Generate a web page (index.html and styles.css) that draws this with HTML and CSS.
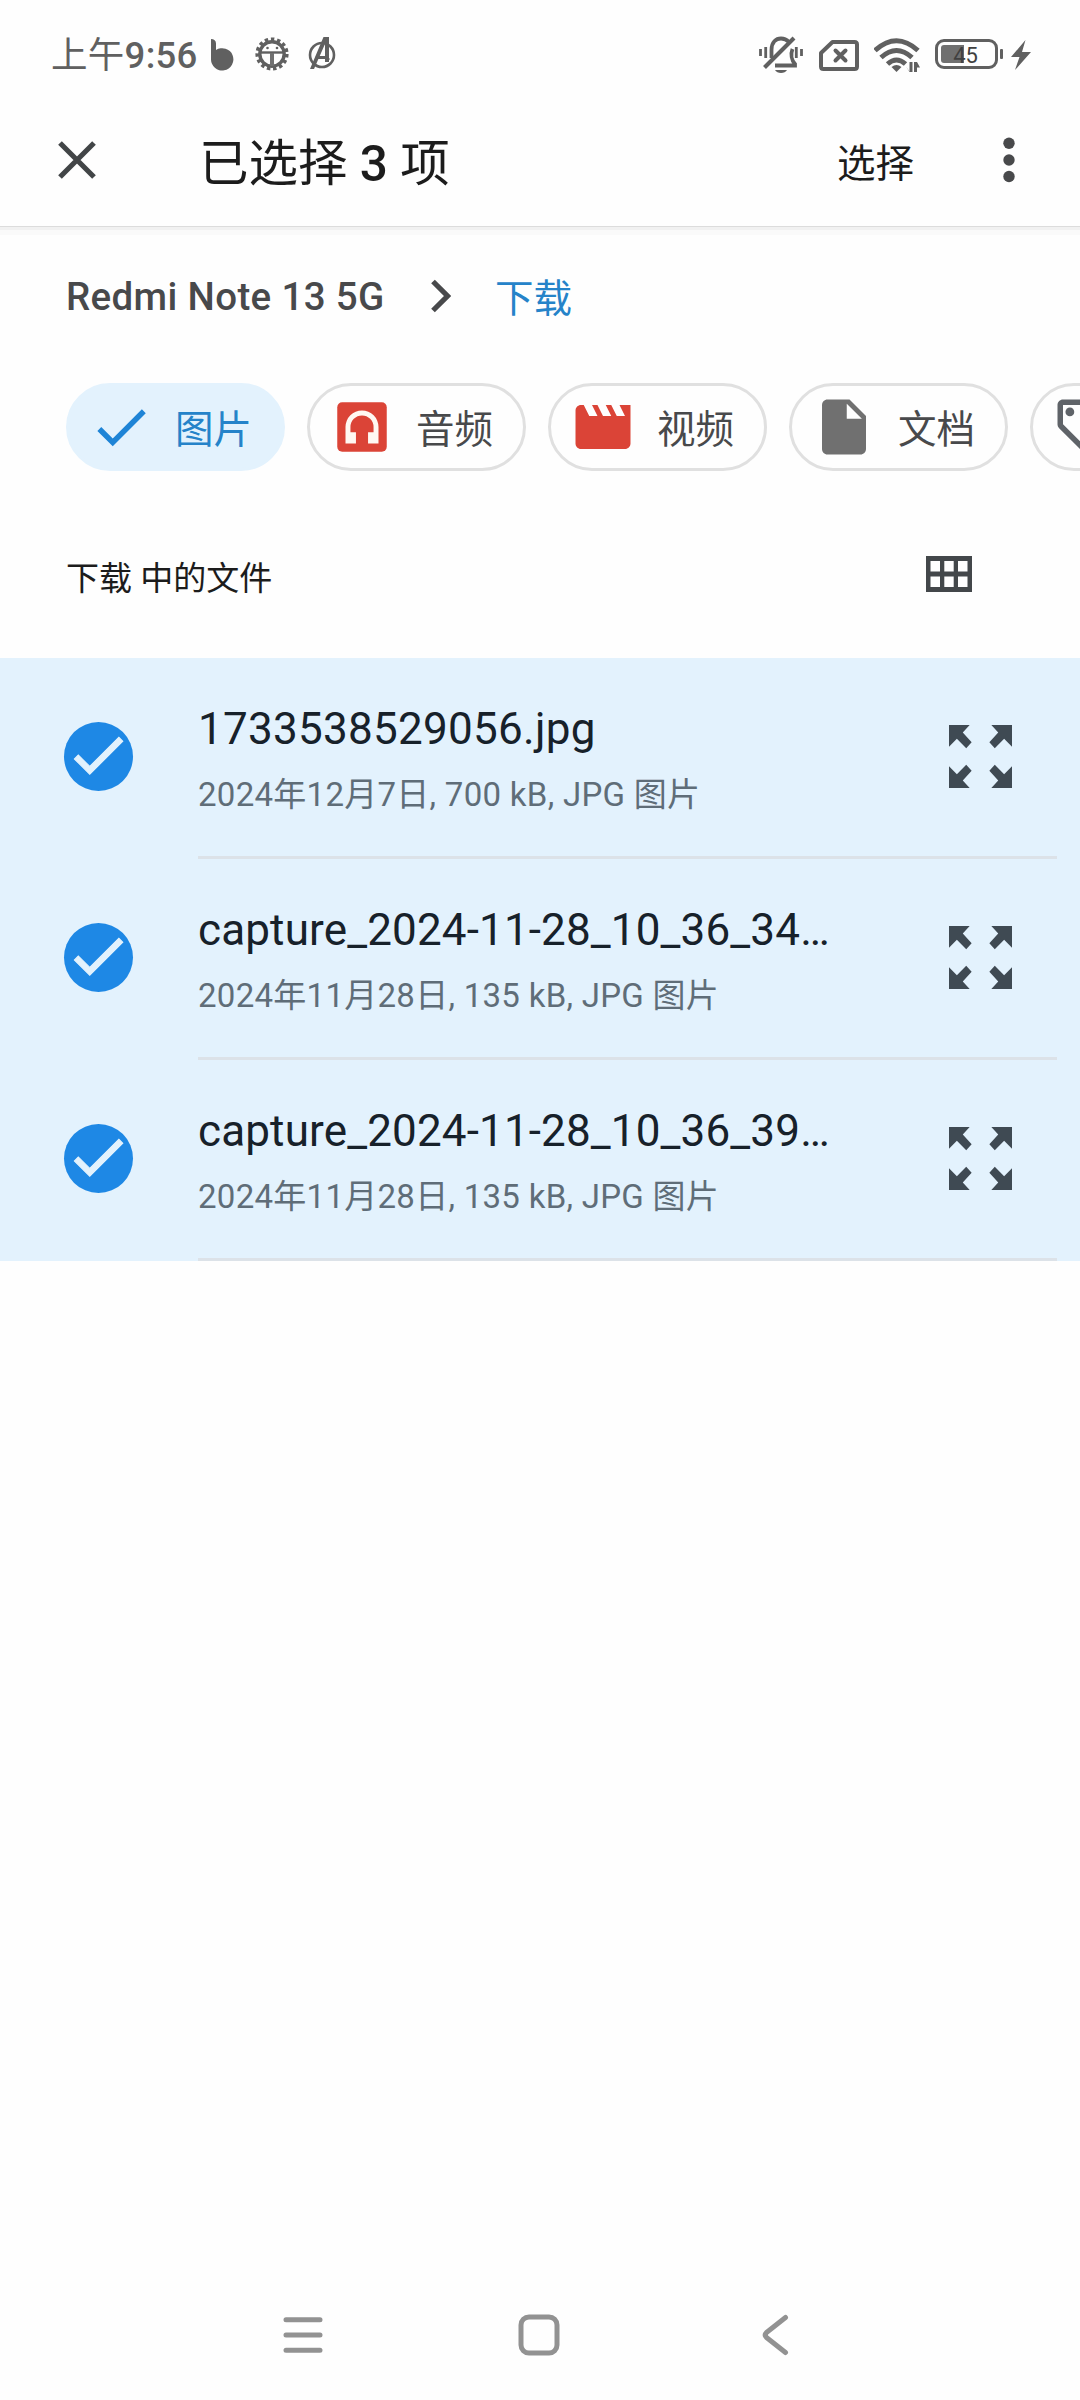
FILE: index.html
```html
<!DOCTYPE html>
<html lang="zh-CN">
<head>
<meta charset="utf-8">
<title>下载</title>
<link rel="stylesheet" href="styles.css">
</head>
<body>
<svg class="defs" width="0" height="0">
  <symbol id="check" viewBox="0 0 24 24"><path d="M9 16.17 4.83 12l-1.42 1.41L9 19 21 7l-1.41-1.41z"/></symbol>
  <symbol id="expand" viewBox="0 0 64 64">
    <g id="arrow"><path d="M0 0H21L14 7.500L23 17.500 17.500 23.500 8 14 0 22z"/></g>
    <use href="#arrow" transform="translate(64 0) scale(-1 1)"/>
    <use href="#arrow" transform="translate(0 64) scale(1 -1)"/>
    <use href="#arrow" transform="translate(64 64) scale(-1 -1)"/>
  </symbol>
</svg>
<div class="screen">
  <header class="status">
    <span class="clock"><span class="ampm">上午</span>9:56</span>
    <svg class="st-b" width="23" height="32" viewBox="0 0 23 32"><path d="M0 0c3 0 5 1.500 5 4.500V11A11.200 11.200 0 1 1 0 20z"/></svg>
    <svg class="st-gear" width="34" height="34" viewBox="-17 -17 34 34">
      <circle r="12.200" fill="none" stroke="#606060" stroke-width="3.400"/>
      <circle r="14.700" fill="none" stroke="#606060" stroke-width="3.800" stroke-dasharray="3.400 2.757"/>
      <path d="M-12-1.500H12" fill="none" stroke="#606060" stroke-width="2.400"/>
      <path d="M0-1V12" fill="none" stroke="#707070" stroke-width="4"/>
      <circle cx="-4.500" cy="-6" r="1.300"/><circle cx="5" cy="-6" r="1.300"/>
    </svg>
    <svg class="st-a" width="28" height="34" viewBox="0 0 28 34">
      <circle cx="14" cy="19" r="12" fill="none" stroke="#606060" stroke-width="2.600"/>
      <path d="M15.500 1H21V26H17V8L6 33H2z"/><path d="M8 20H19L22 23 19 26V23H7z"/>
    </svg>
    <span class="grow"></span>
    <svg class="st-bell" width="44" height="38" viewBox="0 0 44 38">
      <g fill="none" stroke="#606060" stroke-width="3.800">
        <path d="M12.500 22V14C12.500 6 17 2.500 22 2.500c3.500 0 6 1.500 8 3.500M33.500 13C31.500 18 32.500 24 36 28V29.500H16"/>
        <path d="M5.500 31.500 35 2" stroke-width="4"/>
        <path d="M1.500 13V20M6.700 11V22M37.300 11V22M42.500 13V20" stroke-width="2.800"/>
      </g><path d="M16 34H28c-2 4-10 4-12 0z"/>
    </svg>
    <svg class="st-sim" width="40" height="31" viewBox="0 0 40 31">
      <path d="M13.500 2H35.500Q38 2 38 4.500V26.500Q38 29 35.500 29H4.500Q2 29 2 26.500V13z" fill="none" stroke="#606060" stroke-width="4" stroke-linejoin="round"/>
      <path d="M16.500 10.500 26.500 20.500M26.500 10.500 16.500 20.500" stroke="#606060" stroke-width="4" stroke-linecap="round"/>
    </svg>
    <svg class="st-wifi" width="46" height="35" viewBox="0 0 46 35">
      <g fill="none" stroke="#606060" stroke-width="5"><path d="M1 12.500Q22.500-7 44 12.500"/><path d="M7 19.500Q22.500 5.500 38 19.500"/><path d="M13.500 26Q22.500 18 31.500 26"/></g>
      <path d="M17.500 29Q22.500 25 27.500 29L22.500 34z"/>
      <path d="M32 28.500 35.500 33.500V24H38.500V34H35.500zM40 34V24H43L46 29.500H43V34z"/>
    </svg>
    <div class="battery"><span class="level"></span><span class="percent">45</span></div>
    <span class="nub"></span>
    <svg class="st-bolt" width="20" height="30" viewBox="0 0 20 30"><path d="M14.500 0 0 17H8.500L4 30 20 12H11z"/></svg>
  </header>

  <div class="appbar">
    <svg class="close" width="38" height="38" viewBox="0 0 38 38"><path d="M2 2 36 36M36 2 2 36" stroke="#424547" stroke-width="5.200"/></svg>
    <h1 class="title">已选择 <b>3</b> 项</h1>
    <span class="grow"></span>
    <span class="action">选择</span>
    <svg class="more" width="12" height="46" viewBox="0 0 12 46"><circle cx="6" cy="6.200" r="5.700"/><circle cx="6" cy="23" r="5.700"/><circle cx="6" cy="39.500" r="5.700"/></svg>
  </div>

  <nav class="crumbs">
    <span class="root">Redmi Note 13 5G</span>
    <svg class="chev" width="20" height="34" viewBox="0 0 20 34"><path d="M2 2.500 16.500 17 2 31.500" fill="none" stroke="#48494b" stroke-width="5.200"/></svg>
    <span class="here">下载</span>
  </nav>

  <div class="chips">
    <div class="chip on"><svg viewBox="0 0 24 24" fill="#1e84d6"><use href="#check"/></svg><span>图片</span></div>
    <div class="chip"><svg viewBox="0 0 24 24"><rect x="3" y="3" width="18" height="18" rx="1.800" fill="#db4437"/><path d="M6 18V12a6 6 0 0 1 12 0V18H14.200V13.900H16.200V12a4.200 4.200 0 0 0-8.400 0V13.900H9.800V18z" fill="#fff8f2"/></svg><span>音频</span></div>
    <div class="chip"><svg viewBox="0 0 24 24"><path d="M18 4l2 4h-3l-2-4h-2l2 4h-3l-2-4H8l2 4H7L5 4H4c-1.100 0-1.990.9-1.990 2L2 18c0 1.100.9 2 2 2h16c1.100 0 2-.9 2-2V4h-4z" fill="#db4437"/></svg><span>视频</span></div>
    <div class="chip"><svg viewBox="0 0 24 24"><path d="M6 2c-1.100 0-1.990.9-1.990 2L4 20c0 1.100.89 2 1.990 2H18c1.100 0 2-.9 2-2V8l-6-6H6zm7 7V3.500L18.500 9H13z" fill="#707070"/></svg><span>文档</span></div>
    <div class="chip cut"><svg viewBox="0 0 24 24"><path d="M21.410 11.580l-9-9C12.050 2.220 11.550 2 11 2H4c-1.100 0-2 .9-2 2v7c0 .55.22 1.050.59 1.420l9 9c.36.36.86.58 1.410.58s1.050-.22 1.410-.59l7-7c.37-.36.59-.86.59-1.410s-.23-1.060-.59-1.420zM13 20.010L4 11V4h7v-.01l9 9-7 7.020z" fill="#5f6368"/><circle cx="6.500" cy="6.500" r="1.600" fill="#5f6368"/></svg></div>
  </div>

  <div class="section">
    <span>下载 中的文件</span>
    <svg width="46" height="36" viewBox="0 0 46 36"><path fill-rule="evenodd" d="M0 0H46V36H0zM4.500 5V15.500H14V5zM18.300 5V15.500H27.700V5zM32 5V15.500H41.500V5zM4.500 20.500V31H14V20.500zM18.300 20.500V31H27.700V20.500zM32 20.500V31H41.500V20.500z" fill="#43474a"/></svg>
  </div>

  <main class="list">
    <div class="row">
      <div class="tick"><svg viewBox="0 0 24 24"><use href="#check"/></svg></div>
      <div class="file"><div class="texts"><div class="name">1733538529056.jpg</div><div class="meta">2024年12月7日, 700 kB, JPG 图片</div></div>
      <svg class="expand"><use href="#expand"/></svg></div>
    </div>
    <div class="row">
      <div class="tick"><svg viewBox="0 0 24 24"><use href="#check"/></svg></div>
      <div class="file"><div class="texts"><div class="name long">capture_2024-11-28_10_36_34…</div><div class="meta">2024年11月28日, 135 kB, JPG 图片</div></div>
      <svg class="expand"><use href="#expand"/></svg></div>
    </div>
    <div class="row">
      <div class="tick"><svg viewBox="0 0 24 24"><use href="#check"/></svg></div>
      <div class="file"><div class="texts"><div class="name long">capture_2024-11-28_10_36_39…</div><div class="meta">2024年11月28日, 135 kB, JPG 图片</div></div>
      <svg class="expand"><use href="#expand"/></svg></div>
    </div>
  </main>

  <footer class="navbar">
    <svg width="40" height="42" viewBox="0 0 40 42"><path d="M3 5.700H37M3 21H37M3 36.300H37"/></svg>
    <svg class="home" width="42" height="42" viewBox="0 0 42 42"><rect x="3" y="3" width="36" height="36" rx="8"/></svg>
    <svg width="28" height="42" viewBox="0 0 28 42"><path d="M24.500 3.500 5.500 18.500Q3 21 5.500 23.500L24.500 38.500"/></svg>
  </footer>
</div>
</body>
</html>
```
FILE: styles.css
```css
* { box-sizing: border-box; }
body { margin: 0; background: #fefefe; font-family: Roboto, "Noto Sans CJK SC", sans-serif; }
.defs { position: absolute; }
svg { display: block; flex: none; }
.screen { width: 1080px; height: 2400px; display: flex; flex-direction: column; overflow: hidden; background: #fefefe; }
.grow { flex: 1; }

.status { height: 94px; padding: 36px 50px 0 51px; display: flex; align-items: flex-start; fill: #606060; color: #606060; }
.clock { width: 160px; font-size: 36.500px; font-weight: 500; line-height: 40px; letter-spacing: .3px; white-space: nowrap; }
.ampm { font-weight: 400; }
.st-b { margin-top: 3px; }
.st-gear { margin: 1px 0 0 21px; }
.st-a { margin: 0 0 0 19px; }
.st-sim { margin: 4px 0 0 16px; }
.st-wifi { margin: 2px 0 0 15px; }
.battery { width: 63px; height: 30px; margin: 3px 2px 0 15px; border: 3px solid #606060; border-radius: 9px; display: grid; padding: 3px; }
.level { grid-area: 1 / 1; width: 23px; height: 18px; background: #707070; border-radius: 3px 0 0 3px; }
.percent { grid-area: 1 / 1; width: 49px; line-height: 21px; font-size: 22px; text-align: center; color: #404040; }
.nub { width: 3px; height: 10px; margin: 13px 8px 0 0; border-radius: 1px; background: #606060; }
.st-bolt { margin-top: 4px; margin-right: -1px; }

.appbar { height: 132px; padding: 0 65px 0 58px; display: flex; align-items: center; flex: none; }
.title { margin: 0; padding: 7px 0 0 103px; font-size: 49.500px; font-weight: 400; line-height: 60px; color: #1c1c1c; white-space: nowrap; }
.title b { font-weight: 500; }
.action { padding-top: 7px; margin-right: 89px; font-size: 38.500px; line-height: 48px; color: #1c1c1c; }
.more { fill: #48494b; }

.crumbs { height: 138px; padding: 0 66px; display: flex; align-items: center; border-top: 1px solid #dcdcdc; box-shadow: inset 0 3px #f1f1f1, inset 0 8px #fafafa; font-size: 38.500px; line-height: 48px; flex: none; }
.root { width: 365px; padding-top: 3px; font-weight: 500; color: #48494b; letter-spacing: .35px; white-space: nowrap; }
.chev { margin-right: 44px; }
.here { padding-top: 7px; color: #2583c9; }

.chips { height: 106px; padding: 19px 0 0 66px; margin-right: -200px; display: flex; gap: 22px; flex: none; }
.chip { width: 219px; height: 88px; padding: 0 0 0 19px; display: flex; align-items: center; flex: none; border: 3px solid #e0e0e0; border-radius: 44px; font-size: 38.500px; line-height: 48px; color: #48494b; }
.chip svg { width: 66px; height: 66px; margin-right: 21px; }
.chip span { padding-top: 5px; white-space: nowrap; }
.chip.on { background: #e3f2fd; border-color: #e3f2fd; color: #2583c9; }

.section { height: 188px; padding: 0 108px 0 66px; display: flex; justify-content: space-between; align-items: center; font-size: 33px; line-height: 40px; color: #1c1c1c; flex: none; }
.section span { padding-top: 29px; }
.section svg { margin-top: 19px; }

.list { background: #e3f2fd; flex: none; }
.row { height: 201px; padding: 0 23px 0 64px; display: flex; }
.tick { width: 69px; height: 69px; margin: 64px 65px 0 0; padding: 0 1px; border-radius: 50%; background: #1e88e5; flex: none; }
.tick svg { width: 66px; height: 66px; fill: #e3f2fd; stroke: #e3f2fd; stroke-width: .4px; }
.file { flex: 1; display: flex; justify-content: space-between; border-bottom: 3px solid #dce2e8; padding-right: 45px; }
.texts { padding-top: 45px; white-space: nowrap; }
.name { font-size: 44px; line-height: 52px; color: #17212a; letter-spacing: .28px; }
.name.long { letter-spacing: .15px; }
.meta { margin-top: 20px; font-size: 33px; line-height: 40px; color: #5f6d78; letter-spacing: .28px; }
.expand { width: 63px; height: 63px; margin-top: 67px; fill: #3f4a53; }

.navbar { margin-top: auto; height: 130px; padding: 44px 291px 0 283px; display: flex; justify-content: space-between; }
.navbar svg { fill: none; stroke: #929292; stroke-width: 5; stroke-linecap: round; stroke-linejoin: round; }
.navbar .home { margin-right: 7px; }
```
